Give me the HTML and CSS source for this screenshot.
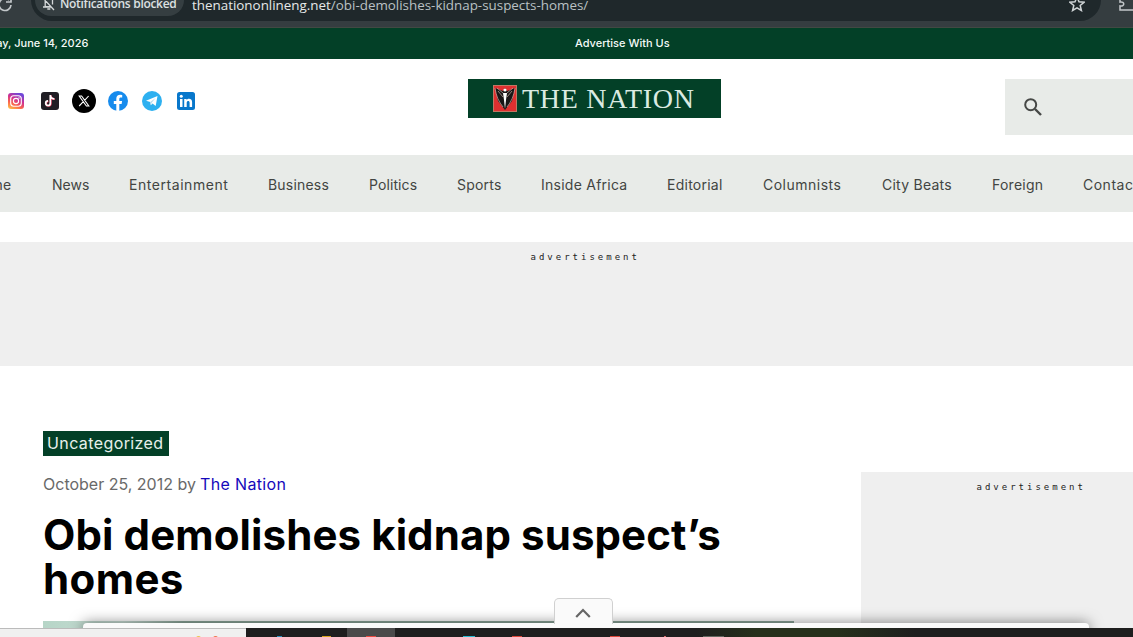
FILE: index.html
```html
<!DOCTYPE html>
<html lang="en">
<head>
<meta charset="utf-8">
<title>Obi demolishes kidnap suspect’s homes</title>
<link rel="stylesheet" href="styles.css">
</head>
<body>
<div class="browser">
  <svg class="reload" viewBox="0 0 14 12"><path d="M11 5a6 6 0 1 1-2-5M11-3v5H6" fill="none" stroke="#c3c8ca" stroke-width="1.7"/></svg>
  <div class="address">
    <div class="permission">
      <svg width="14" height="14" viewBox="0 0 14 14"><path d="M3.2 3v6.7h5M10.5 1v6.5M1 10h8M1 1L12 13M5.3 12h3M4.5 2c1-2 4-2 5 0" fill="none" stroke="#d3d7d8" stroke-width="1.3"/></svg>
      <span>Notifications blocked</span>
    </div>
    <div class="url">thenationonlineng.net<span>/obi-demolishes-kidnap-suspects-homes/</span></div>
    <svg class="star" viewBox="0 0 16 16"><path d="M8 1l2 4.8 5.1.4-3.9 3.3 1.2 5L8 11.8l-4.4 2.7 1.2-5L.9 6.2 6 5.8z" fill="none" stroke="#d0d5d7" stroke-width="1.5"/></svg>
  </div>
  <svg class="puzzle" viewBox="0 0 14 12"><path d="M1 0v2c5-1 5 5 0 4v4h14" fill="none" stroke="#c3c8ca" stroke-width="1.5"/></svg>
</div>
<div class="topbar"><span class="date">Sunday, June 14, 2026</span><span class="promo">Advertise With Us</span></div>
<header class="header">
  <div class="socials">
    <svg class="instagram" viewBox="0 0 16 16"><defs><linearGradient id="ig" x1="0.1" y1="1" x2="0.6" y2="0"><stop offset="0" stop-color="#ffc247"/><stop offset=".35" stop-color="#fa634d"/><stop offset=".65" stop-color="#cf3193"/><stop offset="1" stop-color="#7047d8"/></linearGradient></defs><rect width="16" height="16" rx="3" fill="url(#ig)"/><rect x="2.7" y="2.7" width="10.6" height="10.6" rx="3" fill="none" stroke="#fff" stroke-width="1.1"/><circle cx="8" cy="8" r="2.6" fill="none" stroke="#fff" stroke-width="1.1"/><circle cx="11" cy="5" r=".7" fill="#fff"/></svg>
    <svg class="tiktok" viewBox="0 0 18 18"><rect width="18" height="18" rx="3" fill="#201d24"/><path d="M9.3 3v8.2a2.3 2.3 0 1 1-2.3-2.3M9.3 3c.1 2.2 1.7 3.8 4 3.8" transform="translate(.5 .4)" fill="none" stroke="#f24a6b" stroke-width="1.8"/><path d="M9.3 3v8.2a2.3 2.3 0 1 1-2.3-2.3M9.3 3c.1 2.2 1.7 3.8 4 3.8" fill="none" stroke="#fff" stroke-width="1.7"/></svg>
    <svg class="x" viewBox="0 0 24 24"><circle cx="12" cy="12" r="12" fill="#000"/><path d="M7.2 7h2.4l7.2 10h-2.4zM16.6 7l-4 4.4M11.3 12.7L7.2 17" fill="none" stroke="#fff" stroke-width="1.1"/></svg>
    <svg class="facebook" viewBox="0 0 20 20"><circle cx="10" cy="10" r="10" fill="#168bed"/><path d="M8.3 19.9v-7H5.8V10h2.5V7.8c0-2.6 1.5-4 3.9-4l2 .2v2.5h-1.3c-1.2 0-1.6.7-1.6 1.5v2h2.8l-.5 2.9h-2.3v7z" fill="#fff"/></svg>
    <svg class="telegram" viewBox="0 0 20 20"><circle cx="10" cy="10" r="10" fill="#2db0f0"/><path d="M4 9.7L15.5 5 13.7 15l-3.2-2.4-1.7 1.7-.5-3.2z" fill="#fff"/><path d="M8.3 11.1l5.3-4-4 4.6-.8 2.6z" fill="#b6d9ec"/></svg>
    <svg class="linkedin" viewBox="0 0 18 18"><rect width="18" height="18" rx="2.5" fill="#0877cb"/><path d="M3 7h2.5v8H3zM7.2 7h2.4v1.1c1.5-2.2 5.5-1.6 5.5 2V15h-2.5v-4.3c0-2.4-2.9-2.2-2.9 0V15H7.2z" fill="#fff"/><circle cx="4.25" cy="4.3" r="1.5" fill="#fff"/></svg>
  </div>
  <div class="brand">
    <svg viewBox="0 0 24 27"><rect x=".5" y=".5" width="23" height="26" fill="#df3030" stroke="#c07864"/><path d="M2 3l8 3 2-3 2 3 8-3-3 13-7 9-7-9z" fill="#181616"/><path d="M2 3c1 8 4 14 8 19M22 3c-1 8-4 14-8 19M4 3l6 5M20 3l-6 5M5 6l5 6M19 6l-5 6" fill="none" stroke="#c9b1a7" stroke-width=".7"/><circle cx="12" cy="5" r="1.6" fill="#fff"/><path d="M10 8h4l-1 7-1 9-1-9z" fill="#fff"/></svg>
    <span>THE NATION</span>
  </div>
  <div class="search"><svg viewBox="0 0 18 18"><circle cx="6.7" cy="6.7" r="5.5" fill="none" stroke="#464846" stroke-width="2"/><path d="M11 11l6 6" stroke="#464846" stroke-width="2.4"/></svg></div>
</header>
<nav class="nav">
  <a class="home">Home</a><a class="news">News</a><a class="entertainment">Entertainment</a><a class="business">Business</a><a class="politics">Politics</a><a class="sports">Sports</a><a class="africa">Inside Africa</a><a class="editorial">Editorial</a><a class="columnists">Columnists</a><a class="city">City Beats</a><a class="foreign">Foreign</a><a class="contact">Contact Us</a>
</nav>
<div class="ad ad-wide">advertisement</div>
<main class="content">
  <article class="article">
    <div class="tag">Uncategorized</div>
    <div class="meta"><span class="published">October 25, 2012 by</span><a>The Nation</a></div>
    <h1><span class="line-one">Obi demolishes kidnap suspect’s</span> <span class="line-two">homes</span></h1>
    <div class="photo"></div>
  </article>
  <aside class="ad ad-side">advertisement</aside>
</main>
<div class="drawer"><div class="handle"><svg viewBox="0 0 16 10"><path d="M1.2 9L8 2l6.8 7" fill="none" stroke="#666" stroke-width="2.2"/></svg></div></div>
<div class="taskbar">
  <div class="find"><i class="spark gold"></i><i class="spark orange"></i></div>
  <div class="apps"><i class="app blue"></i><i class="app folder"></i><i class="current"><b></b></i><i class="app cyan"></i><i class="app red"></i><i class="app red-two"></i><i class="app pin"></i><i class="app gray"></i></div>
</div>
</body>
</html>
```
FILE: styles.css
```css
* { box-sizing: border-box; }
body { margin: 0; width: 1133px; height: 637px; overflow: hidden; position: relative; background: #fff; font-family: Inter, sans-serif; color: #424542; }
svg { display: block; flex-shrink: 0; }
.browser { height: 28px; display: flex; align-items: flex-start; background: #353d40; border-bottom: 1px solid #424943; overflow: hidden; }
.reload { width: 14px; height: 12px; }
.address { margin-left: 17px; width: 1070px; height: 21px; background: #1f282b; border-radius: 0 0 21px 21px; display: flex; }
.permission { margin-left: 4px; width: 149px; height: 16px; display: flex; background: #353e41; border-radius: 0 0 16px 16px; padding-left: 7px; color: #dce0e1; font: 600 12px/16px "Open Sans", sans-serif; }
.permission svg { margin-top: -3px; }
.permission span { margin: -4px 0 0 4px; white-space: nowrap; letter-spacing: -.3px; }
.url { margin: -5px 0 0 8px; color: #e6e9e9; font: 13.4px/20px "Open Sans", sans-serif; white-space: nowrap; width: 877px; }
.url span { color: #bac1c4; }
.star { width: 16px; height: 16px; margin-top: -4px; }
.puzzle { width: 14px; height: 12px; margin-left: 18px; }
.topbar { height: 31px; background: #034027; color: #f5faf7; display: flex; font-size: 11px; line-height: 30px; font-weight: 500; white-space: nowrap; }
.date { width: 606px; margin-left: -31px; }
.header { height: 96px; display: flex; }
.socials { display: flex; align-items: center; height: 24px; margin: 30px 0 0 8px; width: 460px; }
.instagram { width: 16px; height: 16px; }
.tiktok { width: 18px; height: 18px; margin-left: 17px; }
.x { width: 24px; height: 24px; margin-left: 13px; }
.facebook { width: 20px; height: 20px; margin-left: 12px; }
.telegram { width: 20px; height: 20px; margin-left: 14px; }
.linkedin { width: 18px; height: 18px; margin-left: 15px; }
.brand { width: 253px; height: 39px; margin-top: 20px; background: #034027; display: flex; align-items: center; color: #dbebe2; font: 28px/39px "Liberation Serif", serif; white-space: nowrap; }
.brand svg { width: 24px; height: 27px; margin-left: 25px; }
.brand span { margin-left: 5px; letter-spacing: .7px; }
.search { width: 128px; height: 56px; margin: 20px 0 0 284px; padding: 19px; background: #e8ebe8; }
.search svg { width: 18px; height: 18px; }
.nav { height: 57px; background: #e8ebe8; display: flex; gap: 40px; overflow: hidden; font-size: 14px; line-height: 60px; white-space: nowrap; }
.nav a { flex-shrink: 0; }
.home { width: 41px; margin-left: -29px; letter-spacing: .3px; }
.news { width: 37px; }
.entertainment { width: 99px; letter-spacing: .55px; }
.business { width: 61px; letter-spacing: .2px; }
.politics { width: 48px; letter-spacing: .1px; }
.sports { width: 44px; letter-spacing: .2px; }
.africa { width: 86px; letter-spacing: .25px; }
.editorial { width: 56px; letter-spacing: .25px; }
.columnists { width: 79px; letter-spacing: .5px; }
.city { width: 70px; letter-spacing: .25px; }
.foreign { width: 51px; letter-spacing: .25px; }
.contact { letter-spacing: .5px; }
.ad { background: #efefef; color: #222; font: 9px/30px "DejaVu Sans Mono", monospace; letter-spacing: 3px; }
.ad-wide { height: 124px; margin-top: 30px; padding-left: 530.5px; }
.content { height: 271px; display: flex; }
.article { padding: 65px 0 0 43px; width: 861px; }
.tag { width: 126px; height: 25px; padding-left: 4px; background: #034027; color: #e8f1ec; font-size: 16px; line-height: 25px; letter-spacing: .4px; }
.meta { display: flex; color: #696969; font-size: 16px; line-height: 24px; height: 24px; margin-top: 16px; white-space: nowrap; }
.published { width: 157px; }
.meta a { color: #1508bb; letter-spacing: .35px; }
h1 { margin: 17px 0 0; color: #000; font-size: 42px; line-height: 44px; height: 88px; font-weight: 700; white-space: nowrap; }
h1 span { display: block; }
.line-one { letter-spacing: .1px; }
.line-two { letter-spacing: .4px; }
.photo { width: 751px; height: 16px; margin-top: 20px; background: linear-gradient(90deg, #b6d5c7, #c9ddd5 80px, #8ca69a 140px); }
.ad-side { width: 272px; margin-top: 106px; padding-left: 115.5px; }
.drawer { position: absolute; left: 83px; top: 623px; width: 1006px; height: 14px; background: #fafafa; border-radius: 4px 4px 0 0; box-shadow: 0 0 14px rgba(0,0,0,.5); display: flex; justify-content: center; }
.handle { position: relative; left: -3px; top: -25px; width: 59px; height: 26px; flex-shrink: 0; background: #fafafa; border: 1px solid #d0d0d0; border-bottom: 0; border-radius: 5px 5px 0 0; display: flex; justify-content: center; padding-top: 9px; }
.handle svg { width: 16px; height: 10px; }
.taskbar { position: absolute; left: 0; top: 628px; width: 1133px; height: 9px; background: #1e1e1e; display: flex; overflow: hidden; }
.find { width: 246px; flex-shrink: 0; background: #f0f0f0; border-top: 1px solid #bbb; padding: 7px 0 0 196px; display: flex; gap: 12px; }
.spark { width: 5px; height: 3px; border-radius: 3px 3px 0 0; background: #ecc54d; }
.orange { background: #f0744b; }
.apps { flex: 1; display: flex; align-items: flex-end; background: linear-gradient(90deg, #1e1e1e 450px, #26301b 510px, #26301b 590px, #1e1e1e 670px); }
.app { height: 1px; flex-shrink: 0; }
.blue { width: 5px; margin-left: 31px; background: #2b91bc; }
.folder { width: 9px; margin-left: 40px; background: #d8a31d; }
.current { width: 48px; height: 9px; margin-left: 16px; background: #4a4a4a; display: flex; justify-content: center; align-items: flex-end; }
.current b { width: 10px; height: 1px; background: #ea4a40; }
.cyan { width: 12px; margin-left: 68px; background: #29bad1; }
.red { width: 10px; margin-left: 37px; background: #dc4639; }
.red-two { width: 10px; margin-left: 88px; background: #dc4639; }
.pin { width: 2px; margin-left: 44px; background: #d66a68; }
.gray { width: 21px; margin-left: 37px; background: #626860; }
```
